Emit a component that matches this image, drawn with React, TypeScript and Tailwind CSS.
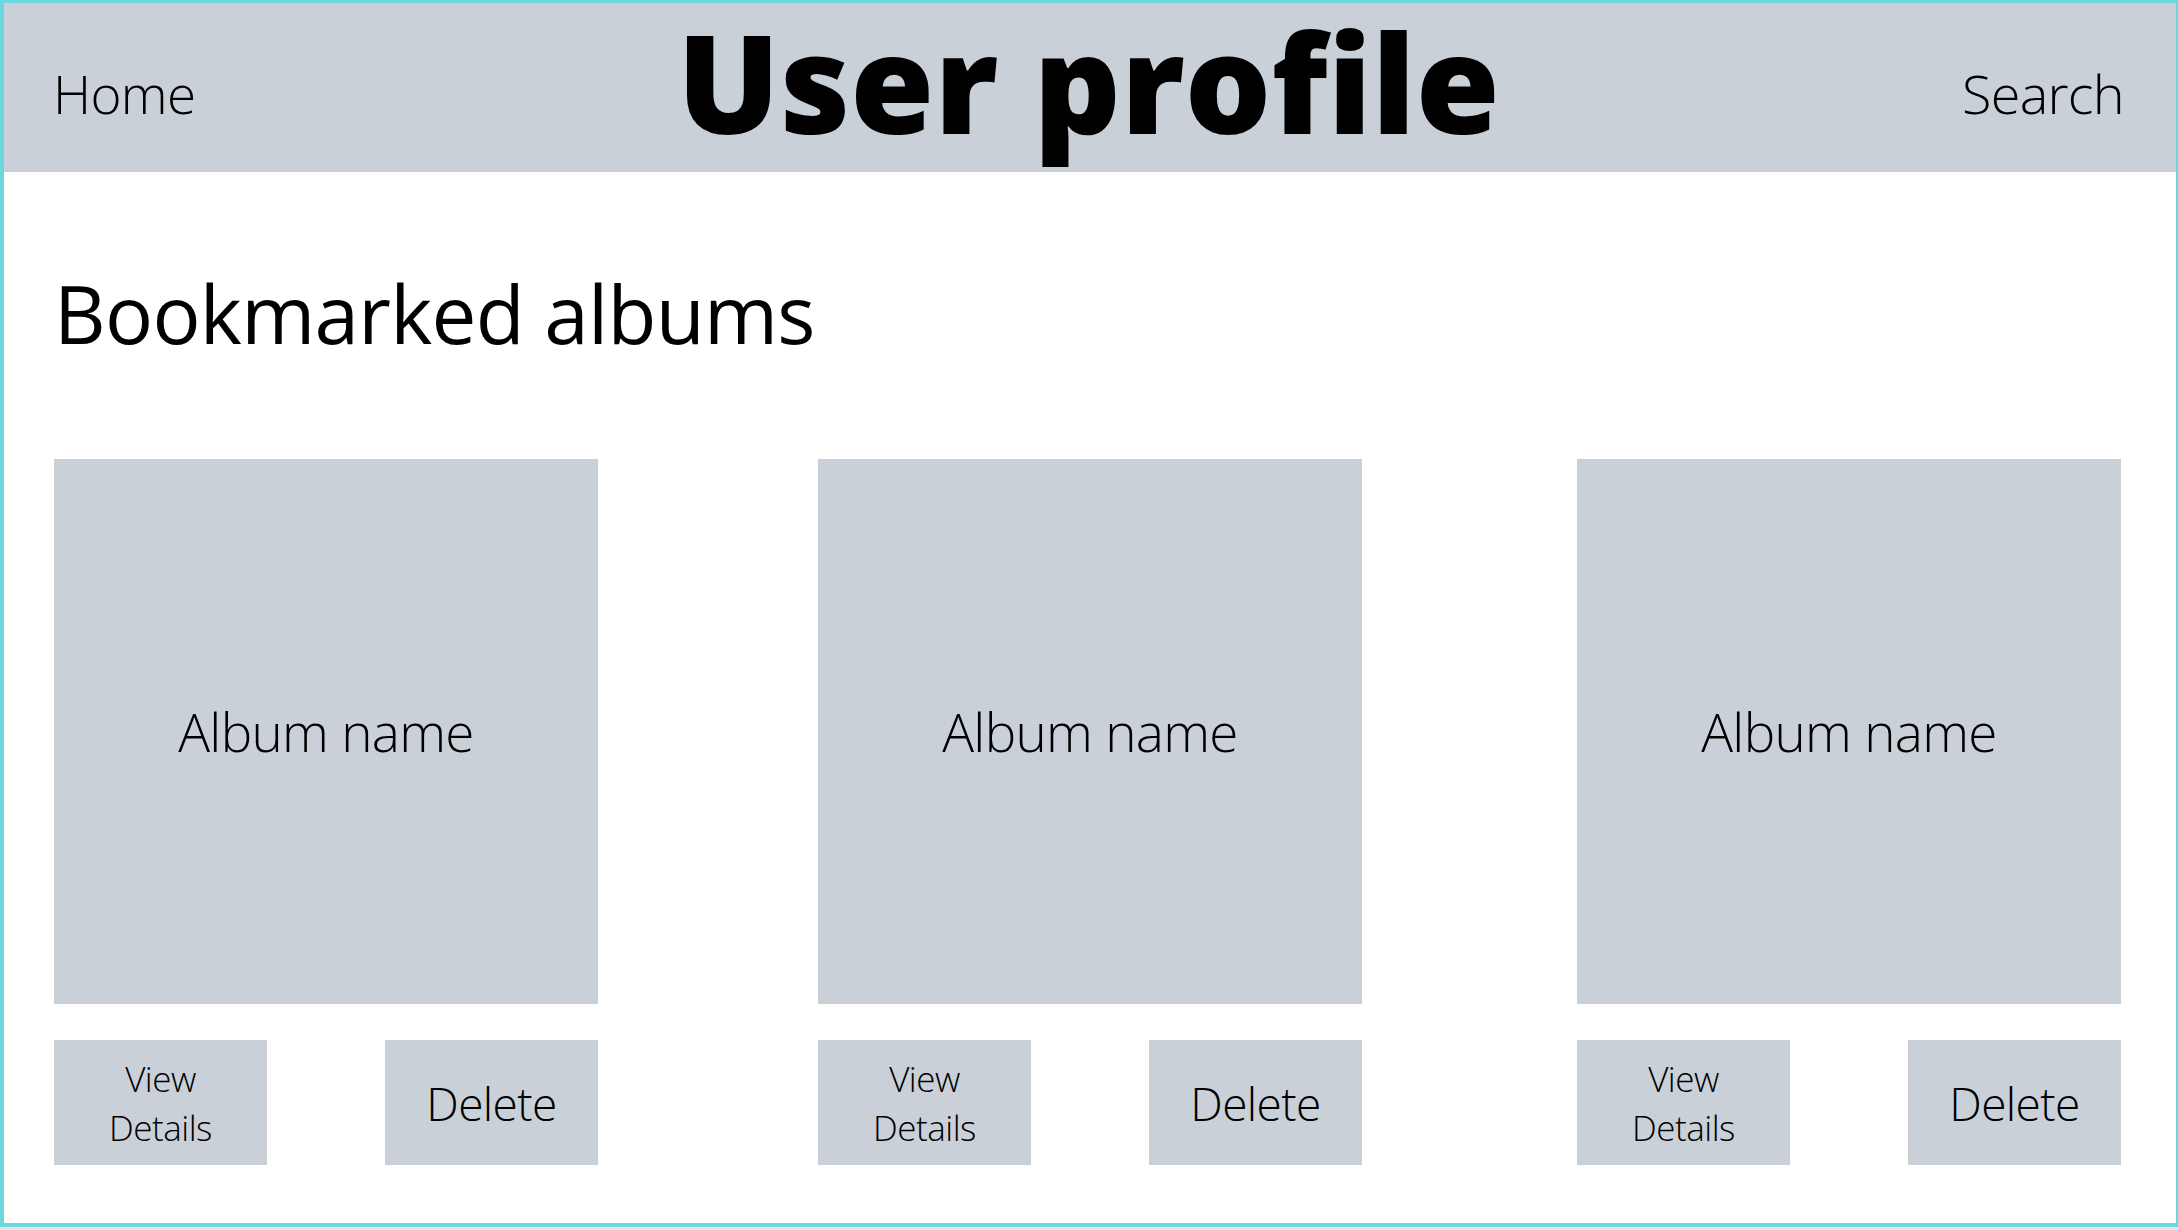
import React from "react";

const font = { fontFamily: '"Open Sans", "Noto Sans", sans-serif' };

function AlbumCard({ className = "" }: { className?: string }) {
  return (
    <div className={"flex w-[544px] flex-col " + className}>
      <div className="flex h-[545px] w-[544px] items-center justify-center bg-[#c9d0d8]">
        <span className="text-[53px] font-light leading-none tracking-[-0.7px] text-black">Album name</span>
      </div>
      <div className="mt-[36px] flex justify-between">
        <button className="flex h-[125px] w-[213px] flex-col items-center justify-center bg-[#c9d0d8] text-[35px] font-light leading-[49px] tracking-[-0.5px] text-black">
          <span>View</span>
          <span>Details</span>
        </button>
        <button className="flex h-[125px] w-[213px] items-center justify-center bg-[#c9d0d8] text-[46px] font-light leading-none tracking-[-0.6px] text-black">
          Delete
        </button>
      </div>
    </div>
  );
}

export default function App() {
  return (
    <div className="h-[1230px] w-[2178px] bg-[#e4e5e7]" style={font}>
      <div className="flex h-[1227px] w-[2178px] flex-col border-b-4 border-l-4 border-r-2 border-t-[3px] border-[#6dd7e0] bg-white">
        <header className="grid h-[169px] shrink-0 grid-cols-[1fr_auto_1fr] items-start bg-[#c9d0d8] pl-[49px] pr-[52px]">
          <a className="mt-[64px] justify-self-start text-[53px] font-light leading-none tracking-[-0.7px] text-black">Home</a>
          <h1 className="mt-[11px] text-[136px] font-extrabold leading-none text-black">User profile</h1>
          <a className="mt-[63px] justify-self-end text-[54px] font-light leading-none tracking-[-0.7px] text-black">Search</a>
        </header>
        <main className="flex flex-col pl-[50px] pr-[54px]">
          <h2 className="mt-[101px] text-[80px] font-normal leading-none tracking-[-0.7px] text-black">Bookmarked albums</h2>
          <div className="mt-[106px] flex">
            <AlbumCard />
            <AlbumCard className="ml-[220px]" />
            <AlbumCard className="ml-[215px]" />
          </div>
        </main>
      </div>
    </div>
  );
}
